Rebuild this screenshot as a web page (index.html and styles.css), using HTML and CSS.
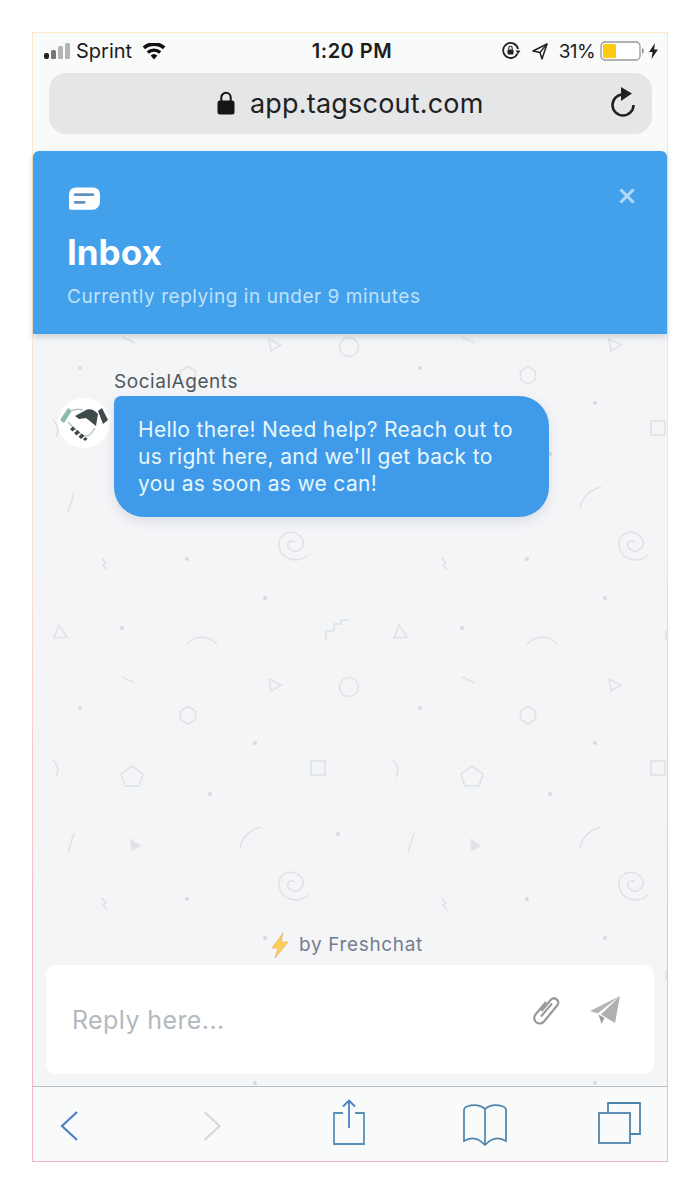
FILE: index.html
```html
<!DOCTYPE html>
<html lang="en">
<head>
<meta charset="utf-8">
<title>Inbox</title>
<link rel="stylesheet" href="styles.css">
</head>
<body>
<div class="frame">
<div class="phone">
  <div class="chrome">
    <div class="status">
      <div class="status-left">
        <svg class="signal" width="28" height="18" viewBox="0 0 28 18"><rect x="1" y="11" width="5" height="6" rx="2" fill="#222"/><rect x="8" y="8" width="5" height="9" rx="1.5" fill="#777"/><rect x="15" y="4" width="5" height="13" rx="1.5" fill="#b5b5b5"/><rect x="22" y="1" width="5" height="16" rx="1.5" fill="#b5b5b5"/></svg>
        <span class="carrier">Sprint</span>
        <svg class="wifi" width="24" height="17" viewBox="0 0 24 17"><path d="M12 16.5 8.6 12.6a5 5 0 0 1 6.800 0Z" fill="#111"/><path d="M6.900 10.700 4.700 8.200a11 11 0 0 1 14.600 0l-2.200 2.500a8 8 0 0 0-10.200 0Z" fill="#111"/><path d="M3.100 6.300.6 3.500a17 17 0 0 1 22.800 0l-2.500 2.800a14 14 0 0 0-17.800 0Z" fill="#111"/></svg>
      </div>
      <span class="time">1:20 PM</span>
      <div class="status-right">
        <svg width="20" height="18" viewBox="0 0 20 18" fill="none"><path d="M16.500 11.500A7.500 7.500 0 1 1 17 7" stroke="#222" stroke-width="1.800"/><path d="M19.500 8.500h-5l2.500 3.500z" fill="#222"/><rect x="6.500" y="7.500" width="6" height="5" rx="1" fill="#222"/><path d="M7.800 7.500V6a1.700 1.700 0 0 1 3.400 0v1.500" stroke="#222" stroke-width="1.100"/></svg>
        <svg class="arrow" width="16" height="17" viewBox="0 0 16 17" fill="none"><path d="M15 1 1 8l7 1.500L10 16z" stroke="#222" stroke-width="1.500" stroke-linejoin="round"/><path d="M15 1 8 9.500" stroke="#222" stroke-width="1.200"/></svg>
        <span class="percent">31%</span>
        <svg class="battery" width="46" height="20" viewBox="0 0 46 20"><rect x="1" y="1" width="39" height="18" rx="4" fill="#fff" stroke="#999" stroke-width="1.300"/><rect x="3" y="3" width="13" height="14" rx="1.500" fill="#fbc90f"/><rect x="42" y="7.500" width="1.500" height="5" rx=".7" fill="#888"/></svg>
        <svg width="9" height="16" viewBox="0 0 9 16"><path d="M6 0 0 9h3.500L2.500 16 9 6.500H5.200z" fill="#222"/></svg>
      </div>
    </div>
    <div class="url">
      <svg class="lock" width="18" height="24" viewBox="0 0 18 24" fill="none"><path d="M4.300 10V6.500a4.700 4.700 0 0 1 9.400 0V10" stroke="#151515" stroke-width="2"/><rect x="0.500" y="9.500" width="17" height="14" rx="2.500" fill="#151515"/></svg>
      <span class="address">app.tagscout.com</span>
      <svg class="reload" width="27" height="31" viewBox="0 0 27 31" fill="none"><path d="M13 7.500A10.500 10.500 0 1 0 23.500 18" stroke="#222" stroke-width="2.600"/><path d="M11 0v14l11-7.500z" fill="#222"/></svg>
    </div>
  </div>

  <header class="head">
    <div class="head-top">
      <svg class="inbox-icon" width="31" height="24" viewBox="0 0 32 24"><path d="M7 0h18a7 7 0 0 1 7 7v8a8 8 0 0 1-8 8H2a2 2 0 0 1-2-2V7a7 7 0 0 1 7-7Z" fill="#fff"/><rect x="5" y="6" width="21" height="3" rx="1.500" fill="#5d92c0"/><rect x="5" y="14" width="12" height="3" rx="1.500" fill="#5d92c0"/></svg>
      <svg class="close" width="18" height="18" viewBox="0 0 18 18"><path d="M2.500 2.500l13 13m0-13-13 13" stroke="#b3d9f8" stroke-width="3" fill="none"/></svg>
    </div>
    <h1 class="title">Inbox</h1>
    <p class="subtitle">Currently replying in under 9 minutes</p>
  </header>

  <main class="chat">
    <svg class="pattern" width="634" height="752" aria-hidden="true">
      <defs>
        <pattern id="doodles" patternUnits="userSpaceOnUse" x="0" y="246" width="340" height="340">
          <g transform="translate(-33 -580)" fill="none" stroke="#e0e2e5" stroke-width="1.600">
            <path d="M59 625 54 638 67 637Z"/>
            <path d="M187 644Q202 630 217 644"/>
            <path d="M326 640V631H334V624H341V620H349"/>
            <path d="M122 677 135 683"/>
            <path d="M269 679 281 685 271 691Z"/>
            <circle cx="349" cy="687" r="9.500"/>
            <path d="M188 706.500 195.500 711V719.500L188 724 180.500 719.500V711Z"/>
            <path d="M53 760Q61 768 56 777"/>
            <path d="M132 766 143 774 139 786H125L121 774Z"/>
            <path d="M311 761H325V775H311Z"/>
            <path d="M74 833 68 852"/>
            <path d="M131 840 140 846 132 850Z" fill="#e0e2e5"/>
            <path d="M240 848Q243 832 261 827"/>
            <path d="M308 895C298 904 281 900 279 886C277 873 292 868 301 877C307 885 299 894 291 890C285 886 288 878 295 882"/>
            <path d="M102 898 106 903 103 905 107 910"/>
            <g fill="#d8dadd" stroke="none">
              <circle cx="122" cy="628" r="2"/>
              <circle cx="80" cy="708" r="2"/>
              <circle cx="255" cy="743" r="2"/>
              <circle cx="210" cy="794" r="2"/>
              <circle cx="338" cy="834" r="2"/>
              <circle cx="187" cy="899" r="2"/>
              <circle cx="265" cy="598" r="2"/>
            </g>
          </g>
        </pattern>
      </defs>
      <rect width="634" height="752" fill="url(#doodles)"/>
    </svg>

    <section class="thread">
      <div class="avatar">
        <svg width="52" height="50" viewBox="0 0 52 50" fill="none">
          <path d="M2 22 10 10 14 12.500 6 25Z" fill="#8dbba9"/>
          <path d="M40 13 44 10 50 22 45 26Z" fill="#3f4a4a"/>
          <path d="M12 13Q19 10 25 12M10 24Q16 31 24 37Q31 41 37 30" stroke="#bcc5c4" stroke-width="1.400"/>
          <path d="M17 18 29 11.500Q35 10 40 16L38 28 28 20 21 21Z" fill="#3f4a4a"/>
          <path d="M12 31l3-2.500 2.500 2.500-3 2.500zM16 35l3.500-3 2.500 2.500-3.500 3zM20.500 38.500l3.500-3 2.500 2.500-3.500 3zM25 41l2.500-2 2 2-2.500 2z" fill="#3f4a4a"/>
        </svg>
      </div>
      <div class="message">
        <div class="sender">SocialAgents</div>
        <div class="bubble">Hello there! Need help? Reach out to us right here, and we'll get back to you as soon as we can!</div>
      </div>
    </section>

    <div class="credit">
      <svg width="18" height="25" viewBox="0 0 18 25"><path d="M12 0 1 15h6L4 25 17 9h-7z" fill="#f9cf55" stroke="#eeb27a" stroke-width=".8"/></svg>
      <span class="credit-text">by Freshchat</span>
    </div>

    <div class="composer">
      <span class="placeholder">Reply here...</span>
      <div class="actions">
        <svg width="28" height="31" viewBox="0 0 28 31" fill="none"><path d="M9.500 16 19 4.500a4.300 4.300 0 0 1 6.500 5.500L12 26.500a5.500 5.500 0 0 1-8.500-7L14 7" stroke="#999" stroke-width="2.200" transform="translate(0 1)"/><path d="M9 22.500 20 9.500" stroke="#999" stroke-width="2"/></svg>
        <svg width="30" height="28" viewBox="0 0 30 28"><path d="M30 0 0 15l7.500 2.500z" fill="#b5b5b5"/><path d="M30 0 11 18.500 25 27z" fill="#b0b0b0"/><path d="M8.500 18.500 11.500 28l3-6z" fill="#9c9c9c"/></svg>
      </div>
    </div>
  </main>

  <nav class="toolbar">
    <svg class="tool" width="48" height="48" viewBox="0 0 48 48" fill="none"><path d="M32 13 17 27l15 14" stroke="#4a80c4" stroke-width="2.200"/></svg>
    <svg class="tool" width="48" height="48" viewBox="0 0 48 48" fill="none"><path d="M21.500 13 36.500 27 21.500 41" stroke="#d6d8da" stroke-width="2.200"/></svg>
    <svg class="tool" width="48" height="48" viewBox="0 0 48 48" fill="none"><path d="M23 14H14V45H44V14H35" stroke="#5a8fb8" stroke-width="1.800"/><path d="M29 29V1.500M23 7.500l6-6 6 6" stroke="#4a80c4" stroke-width="1.800"/></svg>
    <svg class="tool" width="48" height="48" viewBox="0 0 48 48" fill="none"><path d="M27 10Q20 4 9 7.500 6 8.500 6 11V42Q17 35 27 46 37 35 48 42V11Q48 8.500 45 7.500 34 4 27 10ZM27 10V46" stroke="#4f84ad" stroke-width="1.700"/></svg>
    <svg class="tool" width="48" height="48" viewBox="0 0 48 48" fill="none"><path d="M13 14V4H45V35H35" stroke="#4f84ad" stroke-width="1.800"/><rect x="4" y="14" width="31" height="30" stroke="#4f84ad" stroke-width="1.800"/></svg>
  </nav>
</div>
</div>
</body>
</html>
```

FILE: styles.css
```css
* { box-sizing: border-box; }
html, body { margin: 0; padding: 0; background: #fff; }
body { font-family: Inter, "Liberation Sans", sans-serif; height: 1194px; overflow: hidden; }

.frame {
  width: 636px;
  height: 1130px;
  margin: 32px 0 0 32px;
  padding: 1px;
  background: linear-gradient(180deg, #fde9c6 0%, #fbe0d2 45%, #f7b9c6 80%, #f6b4c8 100%);
}
.phone { width: 634px; height: 1128px; display: flex; flex-direction: column; background: #f9fafa; }

.chrome { height: 118px; flex: none; background: #f9fafa; }
.status {
  height: 40px;
  padding: 0 9px 4px 10px;
  display: grid;
  grid-template-columns: 1fr auto 1fr;
  align-items: center;
  color: #1c1c1c;
  font-size: 19px;
}
.status-left, .status-right { display: flex; align-items: center; }
.status-left { gap: 5px; }
.carrier { margin-right: 5px; font-size: 20px; letter-spacing: 0; }
.time { font-weight: 600; font-size: 20px; letter-spacing: .5px; margin-left: 3px; }
.status-right { justify-content: flex-end; }
.arrow { margin-left: 11px; }
.percent { margin-left: 11px; letter-spacing: -.6px; }
.battery { margin-left: 5px; margin-right: 3px; }

.url {
  height: 61px;
  margin: 0 15px 0 16px;
  padding: 0 15px 0 168px;
  border-radius: 17px;
  background: #e4e6e8;
  display: flex;
  align-items: center;
  color: #1f2123;
}
.lock { flex: none; margin-top: -2px; }
.address { margin-left: 15px; font-size: 27px; line-height: 34px; letter-spacing: .2px; flex: 1; }
.reload { flex: none; margin-top: -2px; }

.head {
  height: 183px;
  flex: none;
  padding: 36px 31px 0 34px;
  background: #43a1ec;
  border-radius: 6px 6px 0 0;
  color: #fff;
  box-shadow: 0 3px 6px rgba(60, 80, 100, .22);
  position: relative;
  z-index: 1;
}
.head-top { display: flex; justify-content: space-between; align-items: flex-start; height: 25px; }
.inbox-icon { margin-left: 2px; }
.title { margin: 20px 0 0; font-size: 35px; line-height: 40px; font-weight: 700; letter-spacing: 0; }
.subtitle { margin: 13px 0 0; font-size: 19px; line-height: 24px; color: #bfe2fb; letter-spacing: .55px; }

.chat {
  position: relative;
  flex: 1;
  min-height: 0;
  display: flex;
  flex-direction: column;
  background: #f4f5f7;
}
.pattern { position: absolute; left: 0; top: 0; }

.thread { position: relative; display: flex; gap: 4px; padding: 37px 0 0 25px; }
.avatar {
  width: 52px;
  height: 50px;
  margin-top: 27px;
  border-radius: 50%;
  background: #fff;
  flex: none;
}
.avatar svg { display: block; }
.message { width: 435px; }
.sender { font-size: 19px; line-height: 22px; letter-spacing: .55px; color: #50575e; }
.bubble {
  margin-top: 3px;
  height: 121px;
  padding: 20px 24px;
  border-radius: 7px 30px 30px 30px;
  background: #3f9be9;
  color: #e8f6fd;
  font-size: 21px;
  line-height: 27px;
  letter-spacing: .33px;
  box-shadow: 0 4px 12px rgba(60, 80, 110, .14);
}

.credit {
  position: relative;
  margin-top: auto;
  display: flex;
  justify-content: center;
  align-items: flex-start;
  gap: 10px;
  padding-right: 6px;
  font-size: 19px;
  letter-spacing: .65px;
  color: #747d90;
}
.credit-text { height: 32px; line-height: 24px; background: #f4f5f7; }
.composer {
  position: relative;
  flex: none;
  height: 109px;
  margin: 0 13px 12px;
  padding: 0 34px 0 26px;
  background: #fff;
  border-radius: 9px;
  display: flex;
  align-items: center;
  justify-content: space-between;
}
.placeholder { font-size: 25px; letter-spacing: .4px; color: #b4b9bd; }
.actions { display: flex; gap: 30px; align-items: center; padding-bottom: 20px; }

.toolbar {
  height: 75px;
  flex: none;
  border-top: 1px solid #b9bcc4;
  background: #f9fafa;
  padding: 0 24px 0 12px;
  display: flex;
  justify-content: space-between;
  align-items: flex-start;
}
.tool { margin-top: 12px; overflow: visible; }
```
